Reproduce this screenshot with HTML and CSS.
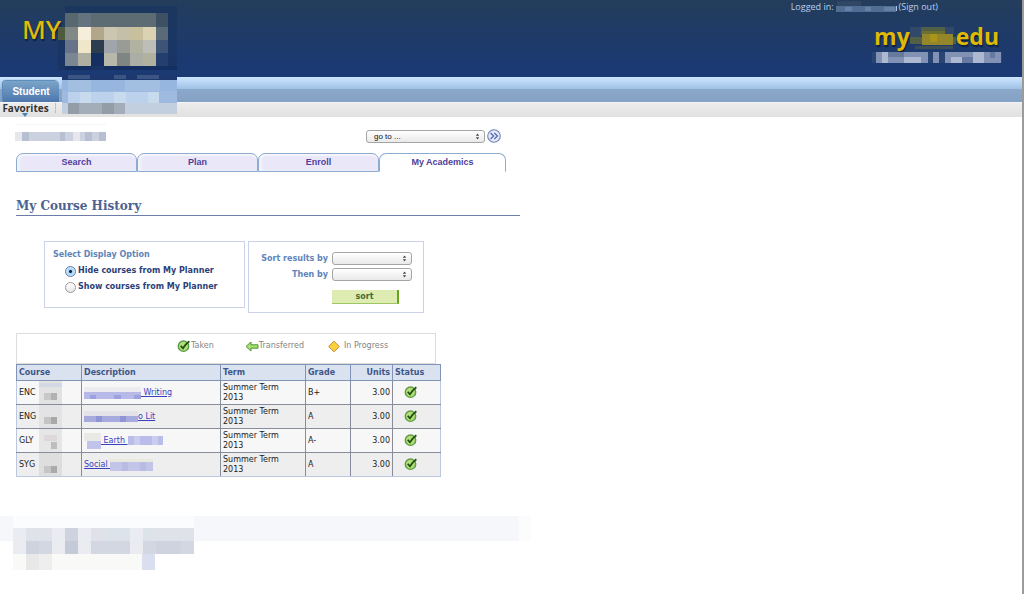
FILE: index.html
```html
<!DOCTYPE html>
<html lang="en">
<head>
<meta charset="utf-8">
<title>My Course History</title>
<link rel="stylesheet" href="styles.css">
</head>
<body>
<svg class="defs" aria-hidden="true">
  <symbol id="taken" viewBox="0 0 14 14">
    <circle cx="6.5" cy="7.2" r="5.2" fill="#b2de75" stroke="#5b9a48" stroke-width="1.4"/>
    <path d="M3.7 6.9L6 9.3Q8.5 5 12.4 2.2" fill="none" stroke="#204f14" stroke-width="1.7"/>
  </symbol>
  <symbol id="spin" viewBox="0 0 6 8">
    <path d="M1 3L3 .5 5 3zM1 5L3 7.5 5 5z" fill="#444"/>
  </symbol>
</svg>
<header class="banner">
  <div class="brand">MY
    <svg class="crest" viewBox="58 6 119 64" shape-rendering="crispEdges" aria-hidden="true">
      <path fill="#17345f" fill-opacity=".6" d="M65 6h112v64H58V40h7z"/>
      <path fill="#4e5b3c" d="M58 27h7v13h-7z"/>
      <path fill="#57686f" d="M65 13h13v14H65z"/><path fill="#65727f" d="M78 13h13v14H78z"/><path fill="#5d6c72" d="M91 13h65v14H91z"/><path fill="#3d5064" d="M156 13h12v14h-12z"/>
      <path fill="#818987" d="M65 27h13v13H65z"/><path fill="#f5eedb" d="M78 27h13v13H78z"/><path fill="#b2a78a" d="M91 27h13v13H91z"/><path fill="#ccc6b0" d="M104 27h13v13h-13z"/><path fill="#c4bfa9" d="M117 27h13v13h-13z"/><path fill="#c8c09d" d="M130 27h13v13h-13z"/><path fill="#dad2b2" d="M143 27h13v13h-13z"/><path fill="#5a6a79" d="M156 27h12v13h-12z"/>
      <path fill="#667389" d="M65 40h13v13H65z"/><path fill="#f0e6ca" d="M78 40h13v13H78z"/><path fill="#2d3d50" d="M91 40h13v13H91z"/><path fill="#9fa5ab" d="M104 40h13v13h-13z"/><path fill="#989c95" d="M117 40h13v13h-13z"/><path fill="#b2b2a1" d="M130 40h13v13h-13z"/><path fill="#bdbeb8" d="M143 40h13v13h-13z"/><path fill="#3d5477" d="M156 40h12v13h-12z"/>
      <path fill="#7a8792" d="M65 53h13v13H65z"/><path fill="#afb0a2" d="M78 53h13v13H78z"/><path fill="#152f60" d="M91 53h13v13H91z"/><path fill="#b7b8a9" d="M104 53h13v13h-13z"/><path fill="#7f8583" d="M117 53h13v13h-13z"/><path fill="#abaea4" d="M130 53h13v13h-13z"/><path fill="#b1b19f" d="M143 53h13v13h-13z"/><path fill="#243f6d" d="M156 53h12v13h-12z"/>
      <path fill="#102b5e" fill-opacity=".6" d="M65 66h26v4H65zM104 66h73v4h-73z"/>
    </svg>
  </div>
  <div class="account">
    <p class="login">Logged in:
      <svg class="user" viewBox="835 0 61 11" shape-rendering="crispEdges" aria-hidden="true"><path fill="#314865" d="M836 0h24v5h-24z"/><path fill="#526d94" d="M835 5h60v6h-60z"/><path fill="#6680a6" d="M844 6h7v4h-7zM864 6h6v4h-6zM883 6h11v4h-11z"/><path fill="#b4c5dc" d="M895 5h1v5h-1z"/></svg>
      <a href="#signout">(Sign out)</a></p>
    <div class="site"><span>my</span>
      <svg class="site-name" viewBox="909 22 46 29" shape-rendering="crispEdges" aria-hidden="true"><path fill="#203c62" d="M914 22h30v7h-30z"/><path fill="#526047" d="M909 39h46v7h-46zM920 29h24v8h-24z"/><path fill="#6c702f" d="M921 33h23v14h-23z"/><path fill="#94862a" d="M921 36h31v11h-31z"/><path fill="#aa9417" d="M929 36h7v8h-7z"/><path fill="#31486a" d="M909 29h11v10h-11zM944 29h9v7h-9z"/><path fill="#3d4d58" d="M914 48h38v3h-38z"/></svg>
      <span>edu</span></div>
    <svg class="tagline" viewBox="872 52 130 11" shape-rendering="crispEdges" aria-hidden="true"><path fill="#294574" d="M872 52h130v11H872z"/><path fill="#8192b5" d="M876 52h52v11h-52zM933 52h6v11h-6zM945 52h56v11h-56z"/><path fill="#adb9d1" d="M882 52h6v11h-6zM904 57h17v6h-17zM951 57h11v6h-11zM973 52h11v11h-11z"/><path fill="#66799f" d="M888 52h16v5h-16zM962 57h11v6h-11zM990 52h5v6h-5z"/></svg>
  </div>
</header>
<nav class="portal" aria-label="Portal">
  <div class="band"><a class="portal-tab" href="#student">Student</a></div>
  <div class="favorites"><button type="button">Favorites</button>
    <svg viewBox="0 0 6 4" aria-hidden="true"><path d="M0 0h6L3 4z" fill="#4482bd"/></svg></div>
  <svg class="menu-blur" viewBox="62 75 115 42" shape-rendering="crispEdges" aria-hidden="true"><path fill="#1c386e" d="M62 75h115v5H62z"/><path fill="#3c5582" d="M68 75h22v4H68zM114 75h12v4h-12zM137 75h22v4h-22z"/><path fill="#96b6df" d="M62 80h115v11H62z"/><path fill="#a2bee1" d="M68 80h23v11H68zM125 80h35v11h-35z"/><path fill="#9ebae0" d="M62 91h115v12H62z"/><path fill="#bcd2ec" d="M68 92h91v11H68z"/><path fill="#c8daee" d="M80 92h11v11H80zM114 92h12v11h-12zM148 92h11v11h-11z"/><path fill="#c1cfdf" d="M62 103h115v11H62z"/><path fill="#a3adba" d="M68 103h57v11H68z"/><path fill="#929da8" d="M68 103h11v11H68zM102 103h12v11h-12z"/><path fill="#e4e3e1" d="M62 114h115v3H62z"/></svg>
</nav>
<main class="content">
  <form class="goto">
    <svg class="student" viewBox="14 123 92 20" shape-rendering="crispEdges" aria-hidden="true"><path fill="#f2f7fa" d="M16 124h90v1H16z"/><path fill="#e6e7ed" d="M15 132h91v9H15z"/><path fill="#ccd1df" d="M29 132h44v9H29zM80 132h26v9H80z"/><path fill="#b7bfd2" d="M22 132h7v9h-7zM60 132h5v9h-5zM85 132h7v9h-7zM99 132h7v9h-7z"/></svg>
    <span class="pick wide"><select aria-label="Go to"><option>go to ...</option></select><svg viewBox="0 0 6 8"><use href="#spin"/></svg></span>
    <button type="button" class="go" aria-label="Go"><svg viewBox="0 0 14 14"><circle cx="7" cy="7" r="6.3" fill="#e0eafa" stroke="#7187b1" stroke-width="1.1"/><path d="M3.5 4L6.7 7 3.5 10M7.3 4L10.5 7 7.3 10" fill="none" stroke="#5266ab" stroke-width="1.2"/></svg></button>
  </form>
  <nav class="tabs" aria-label="Sections">
    <a href="#search">Search</a><a href="#plan">Plan</a><a href="#enroll">Enroll</a><a class="current" href="#academics">My Academics</a>
  </nav>
  <h1>My Course History</h1>
  <form class="options">
    <fieldset class="display">
      <legend>Select Display Option</legend>
      <label><input type="radio" name="planner" checked>Hide courses from My Planner</label>
      <label><input type="radio" name="planner">Show courses from My Planner</label>
    </fieldset>
    <div class="sorting">
      <label for="sort1">Sort results by</label>
      <span class="pick"><select id="sort1"><option></option></select><svg viewBox="0 0 6 8"><use href="#spin"/></svg></span>
      <label for="sort2">Then by</label>
      <span class="pick"><select id="sort2"><option></option></select><svg viewBox="0 0 6 8"><use href="#spin"/></svg></span>
      <button type="button" class="sort">sort</button>
    </div>
  </form>
  <div class="key">
    <span><svg class="icon" viewBox="0 0 14 14"><use href="#taken"/></svg>Taken</span>
    <span><svg class="icon" viewBox="0 0 14 14"><path d="M1 7.5L6 3v2.8h7v3.4H6V12z" fill="#a8e06c" stroke="#4f9340"/></svg>Transferred</span>
    <span class="progress"><svg class="icon" viewBox="0 0 14 14"><path d="M7 2.2L12.3 7.5 7 12.8 1.7 7.5z" fill="#fbd13c" stroke="#c98a35"/></svg>In Progress</span>
  </div>
  <table class="courses">
    <colgroup><col class="c-course"><col class="c-desc"><col class="c-term"><col class="c-grade"><col class="c-units"><col class="c-status"></colgroup>
    <thead><tr><th>Course</th><th>Description</th><th>Term</th><th>Grade</th><th class="num">Units</th><th>Status</th></tr></thead>
    <tbody>
      <tr><td><span class="cell">ENC <svg class="code" viewBox="0 0 24 24" shape-rendering="crispEdges"><path fill="#e2e2e2" d="M0 0h24v24H0z"/><path fill="#d2d9e4" d="M0 2h24v4H0z"/><path fill="#c8c8c8" d="M5 13h14v7H5z"/><path fill="#b1b1b1" d="M12 13h7v7h-7z"/></svg></span></td>
        <td><a class="cell" href="#enc"><svg class="blur" viewBox="0 0 57 12" width="57" height="12" shape-rendering="crispEdges"><path fill="#ebebf0" d="M0 0h57v5H0z"/><path fill="#b7bae8" d="M0 5h57v7H0z"/><path fill="#9ca1e0" d="M6 8h6v4H6zM30 8h7v4h-7zM50 8h7v4h-7z"/></svg>&nbsp;Writing</a></td>
        <td>Summer Term 2013</td><td>B+</td><td class="num">3.00</td><td class="mark"><svg class="icon" role="img" aria-label="Taken" viewBox="0 0 14 14"><use href="#taken"/></svg></td></tr>
      <tr><td><span class="cell">ENG <svg class="code" viewBox="0 0 24 24" shape-rendering="crispEdges"><path fill="#e3e3e5" d="M0 0h24v24H0z"/><path fill="#c4c4c4" d="M5 13h14v7H5z"/><path fill="#a8a8a9" d="M12 13h7v7h-7z"/></svg></span></td>
        <td><a class="cell" href="#eng"><svg class="blur" viewBox="0 0 54 12" width="54" height="12" shape-rendering="crispEdges"><path fill="#e2e2e8" d="M0 0h54v5H0z"/><path fill="#a6aadf" d="M0 5h54v6H0z"/><path fill="#8f94d6" d="M12 5h6v6h-6zM36 5h6v6h-6z"/></svg>o Lit</a></td>
        <td>Summer Term 2013</td><td>A</td><td class="num">3.00</td><td class="mark"><svg class="icon" role="img" aria-label="Taken" viewBox="0 0 14 14"><use href="#taken"/></svg></td></tr>
      <tr><td><span class="cell">GLY <svg class="code" viewBox="0 0 24 24" shape-rendering="crispEdges"><path fill="#e6e6e6" d="M0 0h24v24H0z"/><path fill="#ded7db" d="M5 6h14v7H5z"/><path fill="#bebebf" d="M12 14h7v7h-7z"/></svg></span></td>
        <td><a class="cell" href="#gly"><svg class="blur" viewBox="0 0 17 16" width="17" height="16" shape-rendering="crispEdges"><path fill="#e9e9e6" d="M0 0h17v8H0z"/><path fill="#c1c3ec" d="M3 8h14v8H3z"/></svg>&nbsp;Earth&nbsp;<svg class="blur" viewBox="0 0 35 9" width="35" height="9" shape-rendering="crispEdges"><path fill="#babde9" d="M0 0h35v9H0z"/><path fill="#cbcdee" d="M6 0h6v9H6zM24 0h6v9h-6z"/></svg></a></td>
        <td>Summer Term 2013</td><td>A-</td><td class="num">3.00</td><td class="mark"><svg class="icon" role="img" aria-label="Taken" viewBox="0 0 14 14"><use href="#taken"/></svg></td></tr>
      <tr><td><span class="cell">SYG <svg class="code" viewBox="0 0 24 24" shape-rendering="crispEdges"><path fill="#dedede" d="M0 0h24v24H0z"/><path fill="#c5c5c5" d="M5 14h14v7H5z"/><path fill="#aaa" d="M12 14h7v7h-7z"/></svg></span></td>
        <td><a class="cell" href="#syg">Social&nbsp;<svg class="blur" viewBox="0 0 43 12" width="43" height="12" shape-rendering="crispEdges"><path fill="#e8e9df" d="M0 0h43v3H0z"/><path fill="#c3c5e8" d="M0 3h43v9H0z"/><path fill="#b8bbe3" d="M12 3h6v9h-6zM30 3h6v9h-6z"/></svg></a></td>
        <td>Summer Term 2013</td><td>A</td><td class="num">3.00</td><td class="mark"><svg class="icon" role="img" aria-label="Taken" viewBox="0 0 14 14"><use href="#taken"/></svg></td></tr>
    </tbody>
  </table>
</main>
<footer class="foot">
  <svg viewBox="13 516 181 54" shape-rendering="crispEdges" aria-hidden="true"><path fill="#fbfcfe" d="M13 516h181v12H13z"/><path fill="#e0e2ea" d="M13 528h181v13H13z"/><path fill="#d2d7e2" d="M13 541h181v13H13z"/><path fill="#ebecf1" d="M52 528h13v26H52zM78 528h13v26H78zM130 528h13v26h-13zM13 528h13v26H13z"/><path fill="#ced3df" d="M65 528h13v13H65zM26 541h13v13H26zM156 541h25v13h-25z"/><path fill="#c5cad8" d="M65 541h13v13H65z"/><path fill="#dde3eb" d="M103 528h27v13h-27zM143 528h13v13h-13z"/><path fill="#f9f9f7" d="M13 554h142v16H13z"/><path fill="#e8e8e8" d="M26 554h13v16H26z"/><path fill="#eee" d="M39 554h13v16H39z"/><path fill="#d9dfef" d="M142 554h13v16h-13z"/></svg>
</footer>
</body>
</html>
```

FILE: styles.css
```css
* { box-sizing: border-box; }
body {
  margin: 0;
  min-height: 100vh;
  background: #fff;
  border-right: 2px solid #9b9b9b;
  font: 8px/10px "DejaVu Sans", Verdana, sans-serif;
  color: #222;
}
svg { display: block; flex: none; }
.defs { position: absolute; width: 0; height: 0; }
button, select { font: inherit; color: inherit; }
a { color: inherit; text-decoration: none; }

/* Banner */
.banner {
  display: flex;
  justify-content: space-between;
  min-height: 77px;
  background: linear-gradient(#243d5c, #1b3972 85%);
}
.brand {
  position: relative;
  padding: 12px 0 0 22px;
  font: 500 26px/34px "Noto Sans", "Open Sans", sans-serif;
  color: #e0bc08;
  text-shadow: 1px 2px 1px #10213f;
}
.crest { position: absolute; left: 58px; top: 6px; width: 119px; height: 64px; }
.account { display: flex; flex-direction: column; align-items: flex-end; padding-right: 20px; }
.login {
  display: flex;
  align-items: center;
  gap: 2px;
  margin: 0;
  padding-right: 64px;
  height: 13px;
  font: 9px/13px "Open Sans", sans-serif;
  color: #b9cfee;
}
.user { width: 61px; height: 11px; }
.site {
  display: flex;
  padding: 7px 3px 0 0;
  font: bold 23px/32px "Open Sans", sans-serif;
  color: #dfba05;
  text-shadow: 1px 2px 1px #10213f;
}
.site-name { width: 46px; height: 29px; }
.tagline { width: 130px; height: 11px; }

/* Portal navigation */
.portal { position: relative; }
.band {
  display: flex;
  align-items: flex-end;
  height: 25px;
  padding-left: 3px;
  background: linear-gradient(#cde6ff, #9fc1e6 12px, #8ba8ca 12px, #84a2c4);
}
.portal-tab {
  width: 56px;
  border-radius: 4px 4px 0 0;
  background: linear-gradient(#7ba4c9, #4d77ad);
  box-shadow: -1px -1px 1px #5486b5;
  font: bold 10px/21px "Liberation Sans", Arial, sans-serif;
  color: #fff;
  text-align: center;
}
.favorites {
  height: 15px;
  border-top: 1px solid #f5f5f5;
  background: linear-gradient(#ececec, #e1e1e1);
}
.favorites button {
  display: block;
  width: 56px;
  padding: 0 4px 0 0;
  border: 0;
  border-right: 1px dashed #bbb;
  background: none;
  font: bold 10px/10px "Open Sans", sans-serif;
  color: #333;
}
.favorites svg { width: 6px; height: 4px; margin-left: 22px; }
.menu-blur { position: absolute; left: 62px; top: -2px; width: 115px; height: 42px; }

/* Content */
.content { max-width: 520px; padding: 6px 0 0 16px; }
.goto { display: flex; align-items: flex-end; height: 20px; padding-right: 19px; }
.student { width: 92px; height: 20px; margin: 0 auto 0 -2px; }
.pick { position: relative; display: block; width: 80px; height: 13px; }
.pick.wide { width: 119px; margin-right: 2px; }
.pick select {
  display: block;
  appearance: none;
  width: 100%;
  height: 13px;
  padding: 0 7px;
  border: 1px solid #a5a5a5;
  border-radius: 3px;
  background: linear-gradient(#fff, #e9e9e9);
  font: 8px/10px "DejaVu Sans", Verdana, sans-serif;
}
.pick.wide select { font-family: "Liberation Sans", Arial, sans-serif; color: #111; }
.pick svg { position: absolute; right: 5px; top: 3px; width: 5px; height: 7px; }
.go { width: 14px; height: 14px; padding: 0; border: 0; background: none; }
.tabs { display: grid; grid-template-columns: 121px 121px 121px 127px; margin-top: 10px; }
.tabs a {
  border: 1px solid #8eabd0;
  border-radius: 7px 7px 0 0;
  background: #eae8f8;
  box-shadow: inset 0 2px 0 #f4f5fc, inset 3px 0 2px #f0f4fa;
  font: bold 9px/17px "Liberation Sans", Arial, sans-serif;
  color: #50409b;
  text-align: center;
}
.tabs .current { background: #fff; box-shadow: none; border-bottom-color: #fff; }
h1 {
  margin: 25px 0 0;
  border-bottom: 1px solid #6d7da9;
  font: bold 12px/18px "DejaVu Serif", Georgia, serif;
  color: #4b6290;
}
.options { display: flex; align-items: flex-start; gap: 3px; margin: 25px 0 0 28px; font-weight: bold; }
.display { width: 201px; height: 67px; margin: 0; padding: 8px; border: 1px solid #cbd2e5; }
.display legend { float: left; width: 100%; margin-bottom: 3px; padding: 0; color: #5f85b9; }
.display label { clear: both; display: flex; align-items: center; gap: 2px; height: 16px; padding-left: 12px; color: #2b3f79; }
.display input {
  appearance: none;
  width: 11px;
  height: 11px;
  margin: 0;
  border: 1px solid #999;
  border-radius: 50%;
  background: linear-gradient(#fff, #e7e7e7);
}
.display input:checked { border-color: #557cad; background: radial-gradient(circle, #123 0 1px, #a9d1f8 2px, #d5ecff 5px); }
.sorting {
  display: grid;
  grid-template-columns: 79px 80px;
  align-content: start;
  align-items: center;
  column-gap: 4px;
  row-gap: 3px;
  width: 176px;
  min-height: 72px;
  padding-top: 10px;
  border: 1px solid #cbd2e5;
  color: #5f85b9;
}
.sorting label { text-align: right; }
.sort {
  grid-column: 2;
  width: 67px;
  height: 14px;
  margin-top: 6px;
  padding: 0;
  border: 0;
  border-right: 2px solid #66a51c;
  border-bottom: 1px solid #9fc665;
  background: #deebb1;
  color: #466b38;
}
.key {
  display: flex;
  gap: 31px;
  max-width: 420px;
  height: 31px;
  margin-top: 20px;
  padding: 5px 0 0 160px;
  border: 1px solid #ddd;
  color: #858585;
}
.key span { display: flex; align-items: center; height: 14px; }
.key .progress { gap: 3px; margin-left: -8px; }
.icon { width: 14px; height: 14px; }

/* Course table */
.courses { width: 424px; table-layout: fixed; border-collapse: collapse; border: 1px solid #bcc8e0; }
.c-course { width: 65px; }
.c-desc { width: 139px; }
.c-term { width: 85px; }
.c-grade { width: 45px; }
.c-units { width: 42px; }
.c-status { width: 48px; }
.courses th {
  height: 16px;
  padding: 0 2px;
  border: 1px solid #7f94b7;
  background: #dae2f0;
  color: #405689;
  text-align: left;
}
.courses td { height: 24px; padding: 0 2px; border: 1px solid #868c9c; background: #f7f7f7; }
.courses tr:nth-child(even) td { background: #eee; }
.courses td:first-child { border-left-color: #bcc8e0; }
.courses td:last-child { border-right-color: #bcc8e0; }
.courses tr:last-child td { border-bottom-color: #bcc8e0; }
.courses .num { text-align: right; }
.courses .mark { padding: 0 0 1px 11px; }
.courses td:nth-child(3) { padding-right: 20px; }
.courses a { color: #3840c0; text-decoration: underline; }
.cell { display: flex; align-items: center; }
.code { width: 23px; height: 23px; margin: 0 17px 0 auto; }

/* Footer */
.foot {
  height: 25px;
  max-width: 531px;
  margin-top: 39px;
  padding-left: 13px;
  background: linear-gradient(90deg, #f6f7fa 519px, #fcfcfd 519px);
}
.foot svg { width: 181px; height: 54px; }
```
